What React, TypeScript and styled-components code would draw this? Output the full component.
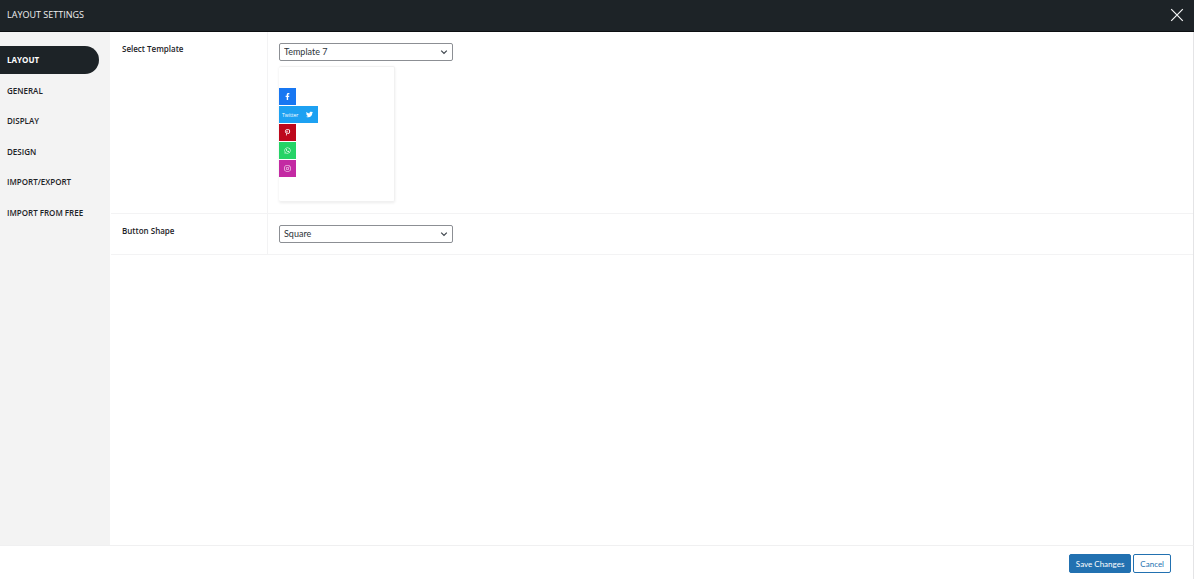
import React, { useState } from 'react';
import styled, { createGlobalStyle } from 'styled-components';
import { FaFacebookF, FaTwitter, FaPinterestP, FaWhatsapp, FaInstagram } from 'react-icons/fa';

const GlobalStyle = createGlobalStyle`
  *, *::before, *::after { box-sizing: border-box; }
  body {
    margin: 0;
    background: #fff;
    color: #1d2327;
    font-family: "Open Sans", "Noto Sans", sans-serif;
    font-size: 8px;
    line-height: 12px;
  }
  button, select { font: 8px/12px "Noto Sans", "Open Sans", sans-serif; }
`;

const Page = styled.div`
  display: flex;
  flex-direction: column;
  min-height: 100vh;
`;

const Header = styled.header`
  display: flex;
  align-items: center;
  justify-content: space-between;
  height: 32px;
  padding: 0 10px 2px 7px;
  background: #1d2327;
  border-bottom: 1px solid #0c0f12;
  color: #f0f0f1;
`;

const Title = styled.h1`
  margin: 0;
  font-size: 9px;
  font-weight: 400;
  line-height: 12px;
`;

const CloseButton = styled.button`
  display: flex;
  padding: 0;
  border: 0;
  background: none;
  color: #f6f7f7;
  cursor: pointer;
`;

const Body = styled.div`
  display: flex;
  flex: 1;
  border-right: 1px solid #e4e4e6;
`;

const Sidebar = styled.nav`
  flex: 0 0 110px;
  padding-top: 14px;
  background: #f3f3f3;
`;

const NavList = styled.ul`
  display: flex;
  flex-direction: column;
  justify-content: space-between;
  min-height: 181px;
  margin: 0;
  padding: 0 11px 0 0;
  list-style: none;
`;

const NavLink = styled.a<{ $active: boolean }>`
  display: block;
  padding: 8px 7px;
  border-radius: 0 14px 14px 0;
  background: ${(p) => (p.$active ? '#1d2327' : 'transparent')};
  color: ${(p) => (p.$active ? '#fff' : '#1d2327')};
  font-weight: ${(p) => (p.$active ? 700 : 600)};
  text-decoration: none;
  white-space: nowrap;
`;

const Main = styled.main`
  flex: 1;
  min-width: 0;
  padding-left: 1px;
`;

const SettingRow = styled.div`
  display: grid;
  grid-template-columns: 157px 1fr;
  border-bottom: 1px solid #f3f3f4;
`;

const SettingLabel = styled.label`
  padding: 11px;
  border-right: 1px solid #f3f3f4;
  font-weight: 600;
`;

const SettingField = styled.div`
  padding: 11px;
`;

const SelectBox = styled.div`
  display: grid;
  align-items: center;
  width: 174px;

  > * { grid-area: 1 / 1; }
  > svg { justify-self: end; margin-right: 5px; pointer-events: none; }
`;

const Select = styled.select`
  width: 100%;
  height: 18px;
  padding: 0 16px 0 4px;
  border: 1px solid #8c8f94;
  border-radius: 2px;
  background: #fff;
  color: #2c3338;
  font-family: Lato, "Open Sans", sans-serif;
  font-size: 9px;
  appearance: none;
`;

const Preview = styled.div`
  display: flex;
  flex-direction: column;
  align-items: flex-start;
  gap: 1px;
  width: 116px;
  min-height: 136px;
  margin-top: 5px;
  padding: 21px 0;
  border: 1px solid #f1f1f1;
  border-left: 0;
  border-radius: 2px;
  box-shadow: 0 1px 3px rgba(0, 0, 0, 0.08);
`;

const ShareButton = styled.span<{ $color: string }>`
  display: flex;
  align-items: center;
  gap: 8px;
  height: 17px;
  padding: 0 5px;
  background: ${(p) => p.$color};
  color: #fff;

  > svg { width: 7px; height: 7px; }
`;

const ShareLabel = styled.span`
  margin-left: -2px;
  font-size: 5px;
  line-height: 8px;
`;

const Footer = styled.footer`
  display: flex;
  align-items: flex-start;
  justify-content: flex-end;
  gap: 2px;
  padding: 8px 22px 6px;
  border-top: 1px solid #f0f0f1;
  border-right: 1px solid #e4e4e6;
`;

const ActionButton = styled.button<{ $primary?: boolean }>`
  height: 19px;
  padding: 0 6px;
  border: 1px solid #2271b1;
  border-radius: 2px;
  background: ${(p) => (p.$primary ? '#2271b1' : '#fff')};
  color: ${(p) => (p.$primary ? '#fff' : '#2271b1')};
  font-family: Lato, "Open Sans", sans-serif;
  cursor: pointer;
`;

const Chevron = () => (
  <svg width="8" height="8" viewBox="0 0 8 8" fill="none" stroke="#3c434a" strokeWidth="1.2" aria-hidden="true">
    <path d="M1.2 2.6 4 5.4 6.8 2.6" />
  </svg>
);

const sections = ['LAYOUT', 'GENERAL', 'DISPLAY', 'DESIGN', 'IMPORT/EXPORT', 'IMPORT FROM FREE'];

const networks = [
  { name: 'Facebook', color: '#1877f2', Icon: FaFacebookF },
  { name: 'Twitter', color: '#1da1f2', Icon: FaTwitter, open: true },
  { name: 'Pinterest', color: '#bd081c', Icon: FaPinterestP },
  { name: 'WhatsApp', color: '#25d366', Icon: FaWhatsapp },
  { name: 'Instagram', color: '#c32aa3', Icon: FaInstagram },
];

export default function App() {
  const [active, setActive] = useState('LAYOUT');

  return (
    <Page>
      <GlobalStyle />
      <Header>
        <Title>LAYOUT SETTINGS</Title>
        <CloseButton type="button" aria-label="Close">
          <svg width="14" height="14" viewBox="0 0 14 14" fill="none" stroke="currentColor" strokeWidth="1.2">
            <path d="M1.2 1.2 12.8 12.8M12.8 1.2 1.2 12.8" />
          </svg>
        </CloseButton>
      </Header>
      <Body>
        <Sidebar aria-label="Settings sections">
          <NavList>
            {sections.map((s) => (
              <li key={s}>
                <NavLink href="#" $active={s === active} onClick={() => setActive(s)}>
                  {s}
                </NavLink>
              </li>
            ))}
          </NavList>
        </Sidebar>
        <Main>
          <SettingRow>
            <SettingLabel htmlFor="template">Select Template</SettingLabel>
            <SettingField>
              <SelectBox>
                <Select id="template" defaultValue="Template 7">
                  <option>Template 7</option>
                </Select>
                <Chevron />
              </SelectBox>
              <Preview>
                {networks.map(({ name, color, Icon, open }) => (
                  <ShareButton key={name} $color={color}>
                    {open && <ShareLabel>{name}</ShareLabel>}
                    <Icon aria-hidden="true" />
                  </ShareButton>
                ))}
              </Preview>
            </SettingField>
          </SettingRow>
          <SettingRow>
            <SettingLabel htmlFor="shape">Button Shape</SettingLabel>
            <SettingField>
              <SelectBox>
                <Select id="shape" defaultValue="Square">
                  <option>Square</option>
                </Select>
                <Chevron />
              </SelectBox>
            </SettingField>
          </SettingRow>
        </Main>
      </Body>
      <Footer>
        <ActionButton type="submit" $primary>Save Changes</ActionButton>
        <ActionButton type="button">Cancel</ActionButton>
      </Footer>
    </Page>
  );
}
